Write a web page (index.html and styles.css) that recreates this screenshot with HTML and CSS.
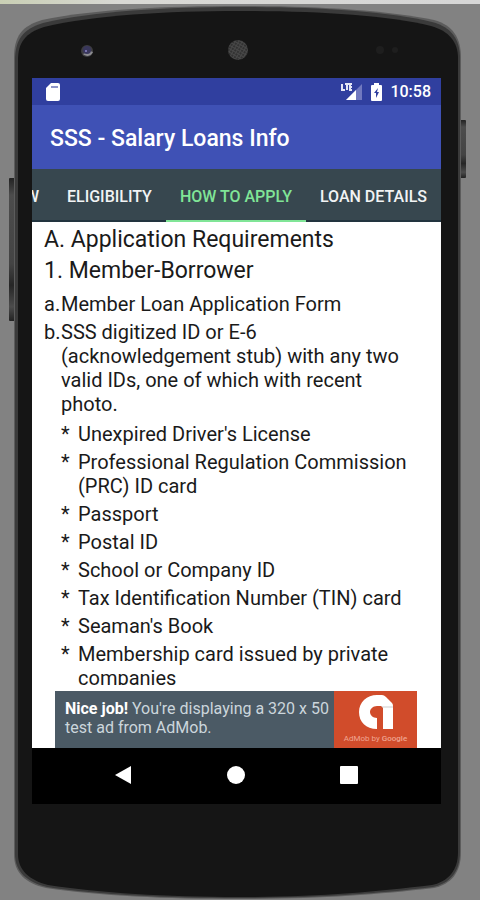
FILE: index.html
```
<!DOCTYPE html>
<html lang="en">
<head>
    <meta charset="UTF-8">
    <meta name="viewport" content="width=device-width, initial-scale=1">
    <title>SSS - Salary Loans Info</title>
    <link rel="stylesheet" href="styles.css">
</head>
<body>
    <div class="phone">
        <!-- phone body, side keys, camera and speaker -->
        <svg class="phone-frame" viewBox="0 0 480 900" preserveAspectRatio="none" aria-hidden="true">
            <defs>
                <linearGradient id="key" x1="0" y1="0" x2="0" y2="1">
                    <stop offset="0" stop-color="#222"/>
                    <stop offset="0.12" stop-color="#4c4c4c"/>
                    <stop offset="0.6" stop-color="#444"/>
                    <stop offset="0.75" stop-color="#262626"/>
                    <stop offset="0.9" stop-color="#4c4c4c"/>
                    <stop offset="1" stop-color="#222"/>
                </linearGradient>
                <linearGradient id="strip" x1="0" y1="0" x2="1" y2="0">
                    <stop offset="0" stop-color="#c9cfb4"/>
                    <stop offset="0.25" stop-color="#d8d8d4"/>
                    <stop offset="1" stop-color="#d6d6d6"/>
                </linearGradient>
                <pattern id="mesh" width="3" height="3" patternUnits="userSpaceOnUse" patternTransform="rotate(30)">
                    <rect width="3" height="3" fill="#484848"/>
                    <circle cx="1" cy="1" r="1" fill="#2a2a2a"/>
                </pattern>
            </defs>
            <rect width="480" height="4" fill="url(#strip)"/>
            <rect x="9" y="178" width="7" height="143" rx="1" fill="url(#key)"/>
            <rect x="460" y="120" width="6" height="58" rx="1" fill="url(#key)"/>
            <path d="M14 58C14 36 22 26 42 20C95 9 165 6 240 6C315 6 385 10 434 20C453 25 461 38 461 58V852C461 873 451 884 434 888C375 895 315 899 240 899C165 899 100 896 46 888C25 883 14 873 14 854Z" fill="#5c5c5c"/>
            <path d="M15 60C15 40 23 29 43 23C95 11 165 7 240 7C315 7 385 11 432 22C452 27 460 40 460 58V852C460 872 450 883 433 887C375 894 315 898 240 898C165 898 100 895 47 887C27 882 15 872 15 854Z" fill="#3a3a3a"/>
            <path d="M18 60C18 43 25 33 44 27C95 15 165 11 240 11C315 11 385 15 431 26C449 31 458 42 458 58V852C458 870 449 881 432 885C375 892 315 897 240 897C165 897 100 893 48 885C29 880 18 870 18 854Z" fill="#151515"/>
            <circle cx="87" cy="51" r="6" fill="#3d3d40"/>
            <path d="M83 54a6 6 0 0 0 10 -2l-3 -1z" fill="#8c8c90"/>
            <circle cx="87" cy="50" r="4" fill="#39375c"/>
            <circle cx="86" cy="51" r="1" fill="#8c86c8"/>
            <circle cx="238" cy="50" r="10" fill="url(#mesh)"/>
            <circle cx="380" cy="50" r="4" fill="#1e1e1e"/>
            <circle cx="395" cy="50" r="3" fill="#1e1e1e"/>
        </svg>

        <div class="screen">
            <div class="status-bar">
                <svg class="icon-sd" viewBox="0 0 14 18" aria-hidden="true">
                    <path d="M5 0H12Q14 0 14 2V16Q14 18 12 18H2Q0 18 0 16V5Z" fill="#fff"/>
                    <path d="M5 4H12" stroke="#8f96c9" stroke-width="2"/>
                </svg>
                <div class="status-right">
                    <svg class="icon-signal" viewBox="0 0 22 18" aria-hidden="true">
                        <path d="M21 1V17H5Z" fill="#7179bf"/>
                        <path d="M15 7V17H5Z" fill="#fff"/>
                        <path d="M1 1V7H4M4 1H8M6 1V7M11 1H9V7H11M9 4H11" fill="none" stroke="#e4e6f5" stroke-width="2"/>
                    </svg>
                    <svg class="icon-battery" viewBox="0 0 11 18" aria-hidden="true">
                        <path d="M3 0H8V2H10Q11 2 11 3V17Q11 18 10 18H1Q0 18 0 17V3Q0 2 1 2H3Z" fill="#fff"/>
                        <path d="M7 5L3 10H5V15L8 9H6Z" fill="#303f9f"/>
                    </svg>
                    <span class="clock">10:58</span>
                </div>
            </div>

            <header class="app-bar">
                <h1>SSS - Salary Loans Info</h1>
            </header>

            <nav class="tabs">
                <button type="button" class="tab">OVERVIEW</button>
                <button type="button" class="tab">ELIGIBILITY</button>
                <button type="button" class="tab selected">HOW TO APPLY</button>
                <button type="button" class="tab">LOAN DETAILS</button>
            </nav>

            <main class="content">
                <h2>A. Application Requirements</h2>
                <h2>1. Member-Borrower</h2>
                <ul class="letters">
                    <li><span class="mark">a.</span><span>Member Loan Application Form</span></li>
                    <li><span class="mark">b.</span><span>SSS digitized ID or E-6 (acknowledgement stub) with any two valid IDs, one of which with recent photo.</span></li>
                </ul>
                <ul class="stars">
                    <li><span class="mark">*</span><span>Unexpired Driver's License</span></li>
                    <li><span class="mark">*</span><span>Professional Regulation Commission (PRC) ID card</span></li>
                    <li><span class="mark">*</span><span>Passport</span></li>
                    <li><span class="mark">*</span><span>Postal ID</span></li>
                    <li><span class="mark">*</span><span>School or Company ID</span></li>
                    <li><span class="mark">*</span><span>Tax Identification Number (TIN) card</span></li>
                    <li><span class="mark">*</span><span>Seaman's Book</span></li>
                    <li><span class="mark">*</span><span>Membership card issued by private companies</span></li>
                </ul>
            </main>

            <div class="ad">
                <p class="ad-text"><b>Nice job!</b> You're displaying a 320 x 50 test ad from AdMob.</p>
                <div class="ad-logo">
                    <svg viewBox="0 0 34 35" aria-hidden="true">
                        <path d="M18 34C7 34 0 27 0 17S8 0 18 0H23Q25 0 27 2L33 8Q34 9 34 11V34H24V11H18C14 11 11 14 11 17S14 23 18 23Z" fill="#fff"/>
                        <path d="M22 11H34V13H24Z" fill="#e6e6e6"/>
                    </svg>
                    <span>AdMob by <b>Google</b></span>
                </div>
            </div>

            <div class="nav-bar">
                <button type="button" aria-label="Back"><svg viewBox="0 0 20 20"><path d="M18 1V19L2 10Z"/></svg></button>
                <button type="button" aria-label="Home"><svg viewBox="0 0 20 20"><circle cx="10" cy="10" r="9"/></svg></button>
                <button type="button" aria-label="Recent apps"><svg viewBox="0 0 20 20"><rect x="1" y="1" width="18" height="18" rx="1"/></svg></button>
            </div>
        </div>
    </div>
</body>
</html>
```
FILE: styles.css
```
* {
    box-sizing: border-box;
}
body {
    margin: 0;
    background-color: #828282;
    font-family: Roboto, "Liberation Sans", sans-serif;
}
h1, h2, p, ul {
    margin: 0;
    padding: 0;
}
button {
    border: 0;
    padding: 0;
    background: none;
    font-family: inherit;
    cursor: pointer;
}
.phone {
    position: relative;
    display: flex;
    min-height: 100vh;
    padding: 78px 39px 96px 32px;
}
.phone-frame {
    position: absolute;
    left: 0;
    top: 0;
    width: 100%;
    height: 100%;
}
.screen {
    position: relative;
    flex: 1;
    min-width: 0;
    display: flex;
    flex-direction: column;
    background-color: #fff;
}

/* status bar */
.status-bar {
    display: flex;
    justify-content: space-between;
    align-items: center;
    height: 27px;
    padding: 0 10px 0 14px;
    background-color: #303f9f;
    color: #fff;
}
.status-right {
    display: flex;
    align-items: center;
    gap: 8px;
}
.icon-sd {
    width: 14px;
    height: 18px;
}
.icon-signal {
    width: 22px;
    height: 18px;
}
.icon-battery {
    width: 11px;
    height: 18px;
}
.clock {
    font-size: 16px;
    font-weight: 500;
}

.app-bar {
    display: flex;
    align-items: center;
    height: 64px;
    padding: 2px 18px 0;
    background-color: #3f51b5;
    color: #fff;
}
.app-bar h1 {
    font-size: 23px;
    font-weight: 500;
    white-space: nowrap;
}

/* tabs, scrolled to the right end */
.tabs {
    display: flex;
    justify-content: flex-end;
    height: 53px;
    overflow: hidden;
    background-color: #37474f;
}
.tab {
    flex: none;
    padding: 3px 14px 0;
    border-bottom: 2px solid #22343f;
    color: #f1f3f4;
    font-size: 16px;
    font-weight: 500;
}
.tab.selected {
    color: #80e597;
    border-bottom-color: #80e597;
}

.content {
    flex: 1 0 0;
    min-height: 0;
    overflow: hidden;
    margin-bottom: 6px;
    padding: 2px 20px 0 12px;
    color: #1a1a1a;
    font-size: 20px;
    line-height: 24px;
}
.content h2 {
    font-size: 23px;
    font-weight: 400;
    line-height: 31px;
}
.content ul {
    list-style: none;
    margin-top: 6px;
}
.content li {
    display: flex;
    margin-bottom: 4px;
}
.mark {
    flex: none;
    width: 17px;
}
.stars {
    padding-left: 17px;
}

/* ad banner */
.ad {
    display: flex;
    height: 57px;
    margin: 0 24px 0 23px;
    background-color: #4b5a65;
}
.ad-text {
    flex: 1;
    padding: 8px 0 0 10px;
    color: #ccd6dc;
    font-size: 16px;
    line-height: 19px;
}
.ad-text b {
    color: #fff;
}
.ad-logo {
    display: flex;
    flex-direction: column;
    align-items: center;
    gap: 3px;
    width: 83px;
    padding-top: 4px;
    background-color: #d14c2b;
    color: #f0a592;
    font-size: 8px;
    line-height: 12px;
}
.ad-logo svg {
    width: 34px;
    height: 35px;
}
.ad-logo b {
    font-weight: 500;
}

.nav-bar {
    display: flex;
    justify-content: center;
    align-items: center;
    gap: 93px;
    height: 56px;
    padding: 0 2px 2px 0;
    background-color: #000;
}
.nav-bar button {
    width: 20px;
    height: 20px;
}
.nav-bar svg {
    display: block;
    width: 20px;
    height: 20px;
    fill: #fff;
}
```
